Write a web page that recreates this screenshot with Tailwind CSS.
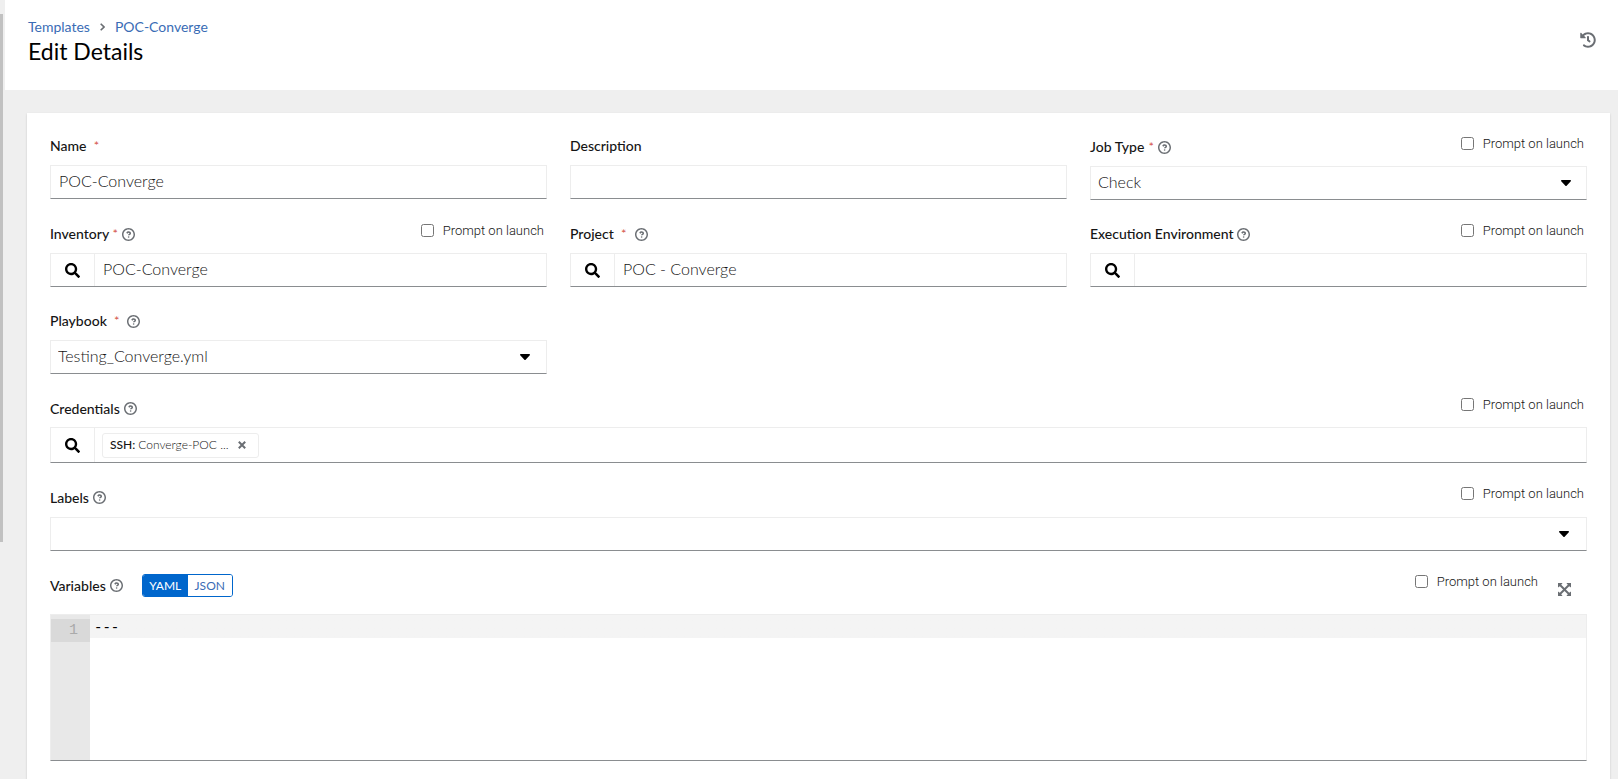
<!DOCTYPE html>
<html lang="en">
<head>
<meta charset="utf-8">
<meta name="viewport" content="width=device-width, initial-scale=1">
<title>Edit Details</title>
<script src="https://cdn.jsdelivr.net/npm/@tailwindcss/browser@4"></script>
</head>
<body class="flex min-h-screen bg-[#efefef] font-[Lato,'Open_Sans',sans-serif] text-[#151515]">
<svg class="hidden" aria-hidden="true">
  <symbol id="help" viewBox="0 0 1024 1024"><path d="M521.3 576C627.5 576 713.7 502 713.7 413.7c0-88.3-86.2-162.3-192.4-162.3-81.2 0-135.500 31.700-176.400 102.500-9 15.600-5.300 35.400 9.100 46.300l50 37.900c14.700 11.100 35.700 8.200 46.900-6.400 24.400-31 41.300-48.300 76.200-48.300 28 0 62.200 16.300 62.200 40.500 0 18.300-16.600 27.600-43.200 42.100C516 482.400 474 504.200 474 560v8c0 4.400 3.600 8 8 8zM522 640a64 64 0 1 0 0 128 64 64 0 0 0 0-128zM512 0C229.200 0 0 229.200 0 512s229.200 512 512 512 512-229.200 512-512S794.800 0 512 0zm0 908c-218.700 0-396-177.300-396-396s177.300-396 396-396 396 177.300 396 396-177.300 396-396 396z"/></symbol>
  <symbol id="search" viewBox="0 0 512 512"><path d="M505 442.700L405.300 343c-4.500-4.500-10.600-7-17-7H372c27.600-35.300 44-79.700 44-128C416 93.100 322.900 0 208 0S0 93.100 0 208s93.100 208 208 208c48.300 0 92.700-16.400 128-44v16.300c0 6.400 2.500 12.500 7 17l99.700 99.700c9.400 9.400 24.600 9.400 33.900 0l28.300-28.300c9.400-9.400 9.400-24.600.1-34zM208 336c-70.700 0-128-57.200-128-128 0-70.700 57.200-128 128-128 70.700 0 128 57.200 128 128 0 70.700-57.200 128-128 128z"/></symbol>
  <symbol id="caret" viewBox="0 0 10 6"><path d="M.7 0h8.600c.6 0 .9.700.5 1.200L5.600 5.700a.8.800 0 0 1-1.200 0L.2 1.200C-.2.700.1 0 .7 0z"/></symbol>
</svg>

<aside class="w-[5px] shrink-0 pt-[14px]"><div class="h-[528px] w-[3px] bg-[#c1c1c1]"></div></aside>

<div class="min-w-0 flex-1">
  <header class="flex h-[90px] items-start justify-between bg-white pl-[23px] pr-[22px] pt-4">
    <div>
      <nav aria-label="Breadcrumb" class="flex items-center text-[14px] leading-[22px] text-[#3a6cb5]">
        <a href="#">Templates</a>
        <svg class="mx-[10px] h-2 w-[5px]" viewBox="0 0 5 8" fill="none" stroke="#6a6e73" stroke-width="1.600"><path d="M.7.700L4 4 .7 7.300"/></svg>
        <a href="#">POC-Converge</a>
      </nav>
      <h1 class="text-[23px] leading-[26px] text-black">Edit Details</h1>
    </div>
    <button type="button" aria-label="History" class="mt-4 text-[#6a6e73]">
      <svg class="h-4 w-4" viewBox="0 0 512 512" fill="currentColor"><path d="M504 255.500c.3 136.600-111.200 248.400-247.800 248.500-59 0-113.200-20.500-155.800-54.900-11.100-8.900-11.900-25.500-1.800-35.600l11.300-11.300c8.600-8.600 22.400-9.600 31.900-2C173.100 425.100 212.800 440 256 440c101.700 0 184-82.300 184-184 0-101.700-82.300-184-184-184-48.800 0-93.200 19-126.100 50l50.800 50.800c10.100 10.100 2.900 27.300-11.300 27.300H24c-8.800 0-16-7.200-16-16V38.600c0-14.300 17.200-21.400 27.300-11.300l49.400 49.400C129.200 34.100 189.600 8 256 8c136.800 0 247.700 110.800 248 247.500zM323.100 326.200l9.800-12.600c8.100-10.500 6.300-25.500-4.200-33.700L288 248.300V152c0-13.300-10.700-24-24-24h-16c-13.300 0-24 10.700-24 24v127.700l65.600 51c10.500 8.100 25.500 6.300 33.500-4.500z"/></svg>
    </button>
  </header>

  <main class="mt-[23px] ml-[22px] mr-2 bg-white px-[23px] pt-6 shadow-[0_1px_2px_rgba(3,3,3,0.16)]">
    <form class="flex min-h-[666px] flex-col gap-6">
      <div class="grid grid-cols-3 gap-x-[23px] gap-y-6">
        <div>
          <div class="flex h-7 items-start text-[14px] leading-[18px]">
            <label for="name" class="font-medium">Name</label><span class="ml-[7px] text-[14px] font-light text-[#c9190b]">*</span>
          </div>
          <input id="name" value="POC-Converge" class="h-[34px] w-full border border-[#ededed] border-b-[#8a8d90] px-2 pb-[3px] text-[16px] font-light outline-none">
        </div>
        <div>
          <div class="flex h-7 items-start text-[14px] leading-[18px]"><label for="desc" class="font-medium">Description</label></div>
          <input id="desc" class="h-[34px] w-full border border-[#ededed] border-b-[#8a8d90] px-2 text-[16px] font-light outline-none">
        </div>
        <div>
          <div class="flex h-[29px] items-start justify-between text-[14px] leading-[19px]">
            <div class="flex items-center"><label for="jobtype" class="font-medium">Job Type</label><span class="ml-1 text-[14px] font-light text-[#c9190b]">*</span>
              <button type="button" aria-label="Help for Job Type" class="ml-1 pt-0.5 text-[#6a6e73]"><svg class="h-[13px] w-[13px]" fill="currentColor"><use href="#help"/></svg></button></div>
            <label class="mr-[3px] flex items-center gap-[9px] font-[Roboto,sans-serif] text-[13px] leading-[13px] font-light"><input type="checkbox" class="h-[13px] w-[13px]">Prompt on launch</label>
          </div>
          <div class="grid h-[34px] items-center border border-[#ededed] border-b-[#8a8d90]">
            <select id="jobtype" class="col-start-1 row-start-1 h-8 w-full appearance-none px-[7px] pb-0.5 text-[16px] font-light outline-none"><option>Check</option><option>Run</option></select>
            <svg class="pointer-events-none col-start-1 row-start-1 mr-[15px] h-[6px] w-[10px] justify-self-end"><use href="#caret"/></svg>
          </div>
        </div>

        <div>
          <div class="flex h-[29px] items-start justify-between text-[14px] leading-[19px]">
            <div class="flex items-center"><label for="inv" class="font-medium">Inventory</label><span class="ml-[3px] text-[14px] font-light text-[#c9190b]">*</span>
              <button type="button" aria-label="Help for Inventory" class="ml-1 pt-0.5 text-[#6a6e73]"><svg class="h-[13px] w-[13px]" fill="currentColor"><use href="#help"/></svg></button></div>
            <label class="mr-[3px] flex items-center gap-[9px] font-[Roboto,sans-serif] text-[13px] leading-[13px] font-light"><input type="checkbox" class="h-[13px] w-[13px]">Prompt on launch</label>
          </div>
          <div class="flex h-[34px] border border-[#ededed] border-b-[#8a8d90]">
            <button type="button" aria-label="Search inventory" class="grid w-11 shrink-0 place-items-center border-r border-[#ededed]"><svg class="h-[15px] w-[15px]"><use href="#search"/></svg></button>
            <input id="inv" value="POC-Converge" class="min-w-0 flex-1 px-2 pb-0.5 text-[16px] font-light outline-none">
          </div>
        </div>
        <div>
          <div class="flex h-[29px] items-start text-[14px] leading-[19px]">
            <div class="flex items-center"><label for="proj" class="font-medium">Project</label><span class="ml-[7px] text-[14px] font-light text-[#c9190b]">*</span>
              <button type="button" aria-label="Help for Project" class="ml-2 pt-0.5 text-[#6a6e73]"><svg class="h-[13px] w-[13px]" fill="currentColor"><use href="#help"/></svg></button></div>
          </div>
          <div class="flex h-[34px] border border-[#ededed] border-b-[#8a8d90]">
            <button type="button" aria-label="Search project" class="grid w-11 shrink-0 place-items-center border-r border-[#ededed]"><svg class="h-[15px] w-[15px]"><use href="#search"/></svg></button>
            <input id="proj" value="POC - Converge" class="min-w-0 flex-1 px-2 pb-0.5 text-[16px] font-light outline-none">
          </div>
        </div>
        <div>
          <div class="flex h-[29px] items-start justify-between text-[14px] leading-[19px]">
            <div class="flex items-center"><label for="ee" class="font-medium">Execution Environment</label>
              <button type="button" aria-label="Help for Execution Environment" class="ml-[3px] pt-0.5 text-[#6a6e73]"><svg class="h-[13px] w-[13px]" fill="currentColor"><use href="#help"/></svg></button></div>
            <label class="mr-[3px] flex items-center gap-[9px] font-[Roboto,sans-serif] text-[13px] leading-[13px] font-light"><input type="checkbox" class="h-[13px] w-[13px]">Prompt on launch</label>
          </div>
          <div class="flex h-[34px] border border-[#ededed] border-b-[#8a8d90]">
            <button type="button" aria-label="Search execution environment" class="grid w-11 shrink-0 place-items-center border-r border-[#ededed]"><svg class="h-[15px] w-[15px]"><use href="#search"/></svg></button>
            <input id="ee" class="min-w-0 flex-1 px-2 pb-0.5 text-[16px] font-light outline-none">
          </div>
        </div>

        <div>
          <div class="flex h-[29px] items-start text-[14px] leading-[19px]">
            <div class="flex items-center"><label for="playbook" class="font-medium">Playbook</label><span class="ml-[7px] text-[14px] font-light text-[#c9190b]">*</span>
              <button type="button" aria-label="Help for Playbook" class="ml-[7px] pt-0.5 text-[#6a6e73]"><svg class="h-[13px] w-[13px]" fill="currentColor"><use href="#help"/></svg></button></div>
          </div>
          <div class="grid h-[34px] items-center border border-[#ededed] border-b-[#8a8d90]">
            <select id="playbook" class="col-start-1 row-start-1 h-8 w-full appearance-none px-[7px] pb-0.5 text-[16px] font-light outline-none"><option>Testing_Converge.yml</option></select>
            <svg class="pointer-events-none col-start-1 row-start-1 mr-4 h-[6px] w-[10px] justify-self-end"><use href="#caret"/></svg>
          </div>
        </div>
      </div>

      <div>
        <div class="flex h-[29px] items-start justify-between text-[14px] leading-[21px]">
          <div class="flex items-center"><label for="cred" class="font-medium">Credentials</label>
            <button type="button" aria-label="Help for Credentials" class="ml-1 text-[#6a6e73]"><svg class="h-[13px] w-[13px]" fill="currentColor"><use href="#help"/></svg></button></div>
          <label class="mr-[3px] flex items-center gap-[9px] font-[Roboto,sans-serif] text-[13px] leading-[13px] font-light"><input type="checkbox" class="h-[13px] w-[13px]">Prompt on launch</label>
        </div>
        <div class="flex h-9 border border-[#ededed] border-b-[#8a8d90]">
          <button id="cred" type="button" aria-label="Search credentials" class="grid w-11 shrink-0 place-items-center border-r border-[#ededed]"><svg class="h-[15px] w-[15px]"><use href="#search"/></svg></button>
          <div class="ml-[7px] flex h-[25px] w-[157px] items-center self-center rounded-[3px] border border-[#ededed] pl-[7px] text-[12px]">
            <span class="font-medium">SSH:</span><span class="ml-[3px] font-light">Converge-POC ...</span>
            <button type="button" aria-label="Remove credential" class="mr-3 ml-auto text-[#6a6e73]"><svg class="h-2 w-2" viewBox="0 0 8 8" fill="none" stroke="currentColor" stroke-width="2"><path d="M.8.800l6.400 6.400M7.200.800L.8 7.200"/></svg></button>
          </div>
        </div>
      </div>

      <div>
        <div class="flex h-[30px] items-start justify-between text-[14px] leading-[21px]">
          <div class="flex items-center"><label for="labels" class="font-medium">Labels</label>
            <button type="button" aria-label="Help for Labels" class="ml-1 text-[#6a6e73]"><svg class="h-[13px] w-[13px]" fill="currentColor"><use href="#help"/></svg></button></div>
          <label class="mr-[3px] flex items-center gap-[9px] font-[Roboto,sans-serif] text-[13px] leading-[13px] font-light"><input type="checkbox" class="h-[13px] w-[13px]">Prompt on launch</label>
        </div>
        <div class="flex h-[34px] border border-[#ededed] border-b-[#8a8d90]">
          <input id="labels" class="min-w-0 flex-1 px-2 pb-0.5 text-[16px] font-light outline-none">
          <button type="button" aria-label="Toggle labels" class="px-[17px]"><svg class="h-[6px] w-[10px]"><use href="#caret"/></svg></button>
        </div>
      </div>

      <div class="-mt-px">
        <div class="flex h-10 items-start justify-between text-[14px]">
          <div class="flex items-center"><label for="vars" class="font-medium">Variables</label>
            <button type="button" aria-label="Help for Variables" class="ml-1 text-[#6a6e73]"><svg class="h-[13px] w-[13px]" fill="currentColor"><use href="#help"/></svg></button>
            <div class="ml-[19px] flex h-[23px] overflow-hidden rounded-[3px] border border-[#0066cc] text-[12px]">
              <button type="button" aria-pressed="true" class="w-[45px] bg-[#0066cc] text-white">YAML</button>
              <button type="button" aria-pressed="false" class="w-[44px] bg-white text-[#3a6cb5]">JSON</button>
            </div>
          </div>
          <div class="flex items-start">
            <label class="flex items-center gap-[9px] font-[Roboto,sans-serif] text-[13px] leading-[15px] font-light"><input type="checkbox" class="h-[13px] w-[13px]">Prompt on launch</label>
            <button type="button" aria-label="Expand editor" class="mr-4 ml-5 mt-[9px] text-[#6a6e73]"><svg class="h-[13px] w-[13px]" viewBox="0 0 13 13" fill="currentColor"><path d="M0 0h4.600L3.200 1.800l3.300 3.300 3.300-3.300L8.400 0H13v4.600l-1.800-1.400-3.300 3.300 3.300 3.300L13 8.400V13H8.400l1.400-1.800-3.300-3.300-3.300 3.300L4.600 13H0V8.400l1.800 1.400 3.300-3.300-3.300-3.300L0 4.600z"/></svg></button>
          </div>
        </div>
        <div class="flex h-[147px] border border-[#ededed] border-b-[#8a8d90] font-['Liberation_Mono',monospace] text-[14px]">
          <div class="w-[39px] shrink-0 bg-[#e8e8e8] pt-1"><div class="bg-[#d9d9d9] pr-3 text-right text-[15px] leading-[23px] text-[#aaaaaa]">1</div></div>
          <textarea id="vars" class="min-w-0 flex-1 resize-none bg-linear-to-b from-[#f4f4f4] from-[23px] to-white to-[23px] px-1 pt-0.5 leading-[23px] text-black outline-none">---</textarea>
        </div>
      </div>
    </form>
  </main>
</div>
</body>
</html>
